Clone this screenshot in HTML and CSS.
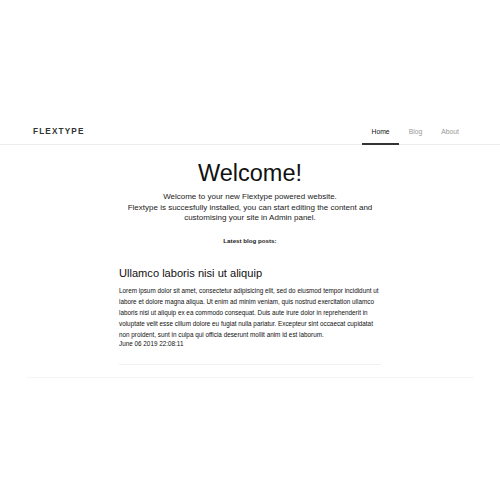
FILE: index.html
```html
<!DOCTYPE html>
<html>
<head>
<meta charset="utf-8">
<link rel="stylesheet" href="styles.css">
</head>
<body>
<header class="header">
  <div class="logo">FLEXTYPE</div>
  <nav class="nav">
    <a class="nav-item active">Home</a>
    <a class="nav-item">Blog</a>
    <a class="nav-item">About</a>
  </nav>
</header>
<main class="main">
  <section class="hero">
    <h1 class="hero-title">Welcome!</h1>
    <p class="hero-text">Welcome to your new Flextype powered website.<br>Flextype is succesfully installed, you can start editing the content and<br>customising your site in Admin panel.</p>
    <p class="latest">Latest blog posts:</p>
  </section>
  <article class="post">
    <h2 class="post-title">Ullamco laboris nisi ut aliquip</h2>
    <p class="post-body">Lorem ipsum dolor sit amet, consectetur adipisicing elit, sed do eiusmod tempor incididunt ut labore et dolore magna aliqua. Ut enim ad minim veniam, quis nostrud exercitation ullamco laboris nisi ut aliquip ex ea commodo consequat. Duis aute irure dolor in reprehenderit in voluptate velit esse cillum dolore eu fugiat nulla pariatur. Excepteur sint occaecat cupidatat non proident, sunt in culpa qui officia deserunt mollit anim id est laborum.</p>
    <div class="post-date">June 06 2019 22:08:11</div>
  </article>
  <div class="footer-line"></div>
</main>
</body>
</html>
```
FILE: styles.css
```css
* { box-sizing: border-box; }
html, body { margin: 0; padding: 0; background: #fff; }
body {
  font-family: "Liberation Sans", Arial, sans-serif;
  color: #111;
  padding-top: 121px;
}
.header {
  display: flex;
  align-items: stretch;
  justify-content: space-between;
  height: 24px;
  border-bottom: 1px solid #ececec;
  padding: 0 31.5px 0 33px;
}
.logo {
  font-size: 8.2px;
  letter-spacing: 1.15px;
  font-weight: 600;
  color: #333;
  line-height: 22px;
}
.nav {
  display: flex;
}
.nav-item {
  font-size: 6.8px;
  color: #999;
  line-height: 22px;
  padding: 0 9.5px;
  border-bottom: 2px solid transparent;
  margin-bottom: -1px;
}
.nav-item.active {
  color: #111;
  border-bottom-color: #333;
}
.main {
  display: flex;
  flex-direction: column;
  align-items: center;
}
.hero { text-align: center; }
.hero-title {
  font-weight: 400;
  font-size: 23.5px;
  margin: 13px 0 0;
  line-height: 30px;
  color: #111;
}
.hero-text {
  font-size: 8px;
  line-height: 10.5px;
  margin: 4px 0 0;
  color: #222;
}
.latest {
  font-size: 6.2px;
  font-weight: 600;
  margin: 12px 0 0;
  line-height: 10px;
  color: #222;
}
.post {
  width: 262px;
  padding-top: 19.5px;
  padding-bottom: 16.5px;
  border-bottom: 1px solid #f0f0f0;
}
.post-title {
  font-weight: 400;
  font-size: 11.1px;
  line-height: 16px;
  margin: 0 0 3.5px;
  color: #111;
}
.post-body {
  font-size: 6.35px;
  line-height: 11px;
  margin: 0;
  color: #111;
}
.post-date {
  font-size: 6.35px;
  line-height: 8px;
}
.footer-line {
  width: 447px;
  margin-top: 12px;
  border-top: 1px solid #f5f5f5;
}
```
